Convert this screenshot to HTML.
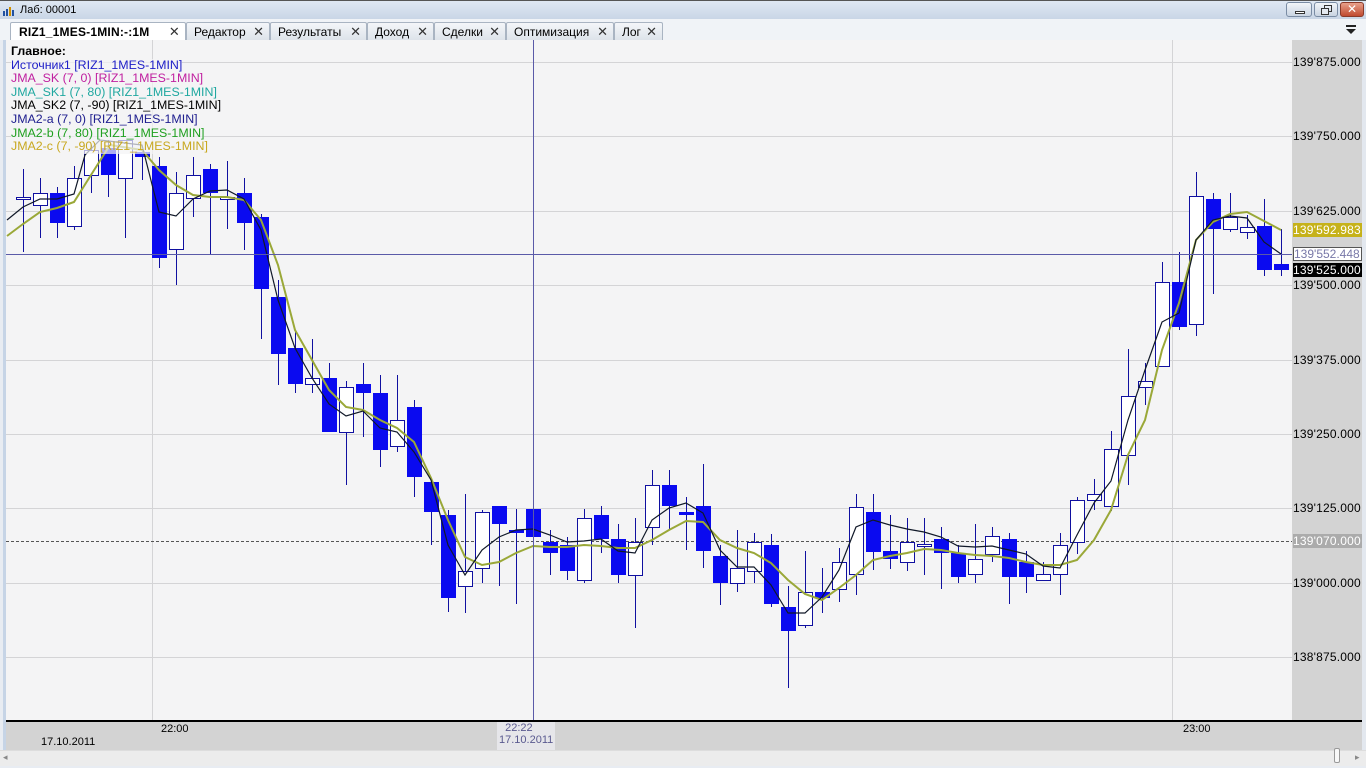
<!DOCTYPE html>
<html><head><meta charset="utf-8"><style>
*{margin:0;padding:0;box-sizing:border-box}
body{width:1366px;height:768px;overflow:hidden;background:#e8ecf2;font-family:"Liberation Sans","DejaVu Sans",sans-serif;position:relative}
#title{position:absolute;left:0;top:0;width:1366px;height:19px;background:linear-gradient(#dfe8f3,#c9d6e6);border-top:1px solid #555;font-size:11px;color:#000}
#title span{position:absolute;left:20px;top:3px}
#tabs{position:absolute;left:0;top:19px;width:1366px;height:21px;background:#f0f3f7}
.tab{position:absolute;top:3px;height:18px;background:linear-gradient(#f4f6f9,#dde3ea);border:1px solid #a9b4c2;border-bottom:none;font-size:12px;padding:2px 0 0 7px;color:#000;border-radius:2px 2px 0 0;white-space:nowrap}
.tab b{position:absolute;right:5px;top:1px;font-weight:normal;font-size:13px;color:#333}
#chart{position:absolute;left:6px;top:40px;width:1286px;height:680px;background:#f4f4f5}
#axis{position:absolute;left:1292px;top:40px;width:70px;height:680px;background:#d3d3d3}
.pl{position:absolute;left:1293px;font-size:12px;color:#000;letter-spacing:.2px;height:14px;line-height:14px;white-space:nowrap}
#time{position:absolute;left:6px;top:720px;width:1356px;height:30px;background:#d3d3d3;border-top:2px solid #000;font-size:11px}
#scroll{position:absolute;left:0;top:750px;width:1366px;height:16px;background:#ececec;border-top:1px solid #ddd}
#legend{position:absolute;left:11px;top:45px;font-size:12.4px;line-height:13.6px;white-space:nowrap}
#legend div{background:rgba(244,244,245,.7);display:inline-block}
</style></head><body>
<div id="title"><svg style="position:absolute;left:2px;top:3px" width="16" height="12"><rect x="1" y="7" width="2" height="5" fill="#2050a0"/><rect x="4" y="5" width="2" height="7" fill="#2050a0"/><rect x="7" y="3" width="2" height="9" fill="#d09000"/><rect x="10" y="6" width="2" height="6" fill="#2050a0"/></svg><span>Лаб: 00001</span>
<div style="position:absolute;left:1286px;top:1px;width:26px;height:15px;border:1px solid #7a8ca4;border-radius:3px;background:linear-gradient(#f2f5f9,#c9d4e2)"><div style="position:absolute;left:8px;top:8px;width:10px;height:3px;border:1px solid #333;background:#fff"></div></div>
<div style="position:absolute;left:1314px;top:1px;width:24px;height:15px;border:1px solid #7a8ca4;border-radius:3px;background:linear-gradient(#f2f5f9,#c9d4e2)"><div style="position:absolute;left:9px;top:2px;width:8px;height:7px;border:1px solid #333"></div><div style="position:absolute;left:6px;top:5px;width:8px;height:7px;border:1px solid #333;background:#e4e9f0"></div></div>
<div style="position:absolute;left:1340px;top:1px;width:24px;height:15px;border:1px solid #8a3a2a;border-radius:3px;background:linear-gradient(#e8a08a,#c04a30);color:#fff;font-size:12px;font-weight:bold;text-align:center;line-height:13px">✕</div>
</div>
<div id="tabs">
<div class="tab" style="left:10px;width:176px;background:#fff;font-weight:bold;letter-spacing:.2px;padding-left:8px">RIZ1_1MES-1MIN:-:1M<b>✕</b></div>
<div class="tab" style="left:186px;width:84px">Редактор<b>✕</b></div>
<div class="tab" style="left:270px;width:97px">Результаты<b>✕</b></div>
<div class="tab" style="left:367px;width:67px">Доход<b>✕</b></div>
<div class="tab" style="left:434px;width:72px">Сделки<b>✕</b></div>
<div class="tab" style="left:506px;width:108px">Оптимизация<b>✕</b></div>
<div class="tab" style="left:614px;width:49px">Лог<b>✕</b></div>
<div style="position:absolute;left:1346px;top:6px;width:10px;height:2px;background:#222"></div>
<div style="position:absolute;left:1346px;top:10px;border-left:5px solid transparent;border-right:5px solid transparent;border-top:5px solid #222"></div>
</div>
<div style="position:absolute;left:3px;top:40px;width:3px;height:710px;background:#c6d4e6"></div>
<div style="position:absolute;left:1362px;top:40px;width:4px;height:710px;background:#e3e8ef"></div>
<div id="chart"></div>
<div id="axis"></div>
<svg id="svg" style="position:absolute;left:0;top:0" width="1366" height="768"></svg>
<div class="pl" style="top:55px">139'875.000</div>
<div class="pl" style="top:129px">139'750.000</div>
<div class="pl" style="top:204px">139'625.000</div>
<div class="pl" style="top:223px;background:#c6b21a;color:#fff;width:69px">139'592.983</div>
<div class="pl" style="top:247px;background:#fff;color:#7878a8;width:69px;border:1px solid #555;line-height:12px;letter-spacing:0">139'552.448</div>
<div class="pl" style="top:263px;background:#000;color:#fff;width:69px">139'525.000</div>
<div class="pl" style="top:278px">139'500.000</div>
<div class="pl" style="top:353px">139'375.000</div>
<div class="pl" style="top:427px">139'250.000</div>
<div class="pl" style="top:501px">139'125.000</div>
<div class="pl" style="top:534px;background:#ababab;color:#fff;width:69px">139'070.000</div>
<div class="pl" style="top:576px">139'000.000</div>
<div class="pl" style="top:650px">138'875.000</div>
<div id="time">
<span style="position:absolute;left:155px;top:1px">22:00</span>
<span style="position:absolute;left:35px;top:14px">17.10.2011</span>
<span style="position:absolute;left:491px;top:0;background:#e6e6ea;color:#5a5a90;padding:0 2px;height:28px">&nbsp;&nbsp;22:22<br>17.10.2011</span>
<span style="position:absolute;left:1177px;top:1px">23:00</span>
</div>
<div id="scroll"><span style="position:absolute;left:3px;top:1px;font-size:9px;color:#888">◂</span><div style="position:absolute;left:1334px;top:-3px;width:6px;height:15px;border:1px solid #999;background:#f8f8f8;border-radius:2px"></div><span style="position:absolute;left:1355px;top:1px;font-size:9px;color:#888">▸</span></div>
<div id="legend">
<div style="font-weight:bold">Главное:</div><br>
<div style="color:#2020c8">Источник1 [RIZ1_1MES-1MIN]</div><br>
<div style="color:#c020a0">JMA_SK (7, 0) [RIZ1_1MES-1MIN]</div><br>
<div style="color:#20a8a0">JMA_SK1 (7, 80) [RIZ1_1MES-1MIN]</div><br>
<div style="color:#000">JMA_SK2 (7, -90) [RIZ1_1MES-1MIN]</div><br>
<div style="color:#202090">JMA2-a (7, 0) [RIZ1_1MES-1MIN]</div><br>
<div style="color:#20a020">JMA2-b (7, 80) [RIZ1_1MES-1MIN]</div><br>
<div style="color:#c8a820">JMA2-c (7, -90) [RIZ1_1MES-1MIN]</div>
</div>
<script>
var C=[[23,197,198,169,252,0],[40,193,205,178,238,0],[57,193,223,187,238,1],[74,178,226,166,230,0],[91,150,175,145,193,0],[108,148,175,140,197,1],[125,140,178,140,238,0],[142,152,157,150,180,1],[159,166,258,157,268,1],[176,193,249,172,285,0],[193,175,198,157,217,0],[210,169,193,164,255,1],[227,197,199,161,229,0],[244,193,223,178,250,1],[261,217,289,214,339,1],[278,297,354,280,385,1],[295,348,384,331,393,1],[312,378,384,339,393,0],[329,378,432,363,432,1],[346,387,432,381,485,0],[363,384,393,363,437,1],[380,393,450,375,467,1],[397,420,446,375,452,0],[414,407,477,400,497,1],[431,482,512,482,545,1],[448,515,598,510,612,1],[465,571,586,494,613,0],[482,512,568,510,583,0],[499,506,524,506,586,1],[516,530,533,509,604,1],[533,509,537,503,583,1],[550,542,553,530,575,1],[567,545,571,537,580,1],[584,518,580,509,583,0],[601,515,539,506,553,1],[618,539,575,524,583,1],[635,542,575,518,628,0],[652,485,527,470,545,0],[669,485,506,470,529,1],[686,512,515,497,550,1],[703,506,551,464,568,1],[720,556,583,545,605,1],[737,568,583,530,592,0],[754,542,571,533,583,0],[771,545,604,534,607,1],[788,607,631,586,688,1],[805,592,625,551,628,0],[822,592,598,568,613,1],[839,562,589,548,602,0],[856,507,574,494,595,0],[873,512,552,494,570,1],[890,551,559,515,569,1],[907,542,562,518,571,0],[924,544,545,518,575,0],[941,539,553,527,589,1],[958,553,577,545,583,1],[975,559,574,524,583,0],[992,536,554,527,562,0],[1009,539,577,533,604,1],[1026,562,577,551,593,1],[1043,574,580,562,580,0],[1060,545,574,533,595,0],[1077,500,542,497,554,0],[1094,494,500,479,510,0],[1111,449,506,431,511,0],[1128,396,455,349,485,0],[1145,381,387,363,405,0],[1162,282,366,262,366,0],[1179,282,327,252,330,1],[1196,196,324,172,336,0],[1213,199,229,193,294,1],[1230,217,229,193,232,0],[1247,227,232,215,239,0],[1264,226,270,199,276,1],[1281,264,270,229,276,1]];
var B="7,220 23,207 40,199 57,199 74,194 85,155 100,140 142,145 159,212 176,216 193,199 210,191 227,190 244,199 261,230 278,300 295,348 312,378 329,404 346,416 363,411 380,428 397,432 414,452 431,480 448,545 465,575 482,550 499,537 516,530 533,529 550,535 567,542 584,541 601,539 618,551 635,553 652,520 669,508 686,503 703,513 720,550 737,567 754,567 771,585 788,613 805,613 822,597 839,570 856,527 873,520 890,525 907,529 924,532 941,537 958,546 975,547 992,546 1009,550 1026,554 1043,566 1060,568 1077,535 1094,503 1111,481 1128,420 1145,370 1162,322 1179,313 1196,240 1213,220 1230,216 1247,218 1264,242 1281,254";
var O="7,236 23,224 40,212 57,208 74,202 91,175 110,145 142,150 159,170 176,185 193,195 210,197 227,197 244,200 261,220 278,265 295,330 312,360 329,390 346,407 363,410 380,420 397,428 414,442 431,478 448,520 465,557 482,565 499,562 516,553 533,546 550,547 567,547 584,545 601,546 618,548 635,548 652,540 669,530 686,521 703,522 720,540 737,548 754,553 771,563 788,580 805,594 822,600 839,588 856,575 873,560 890,556 907,553 924,549 941,550 958,553 975,555 992,556 1009,558 1026,562 1043,565 1060,565 1077,560 1094,540 1111,510 1128,455 1145,420 1162,350 1179,303 1196,240 1213,222 1230,214 1247,212 1264,221 1281,230";
var s='';
[62,136,211,285,360,434,508,583,657].forEach(function(y){s+='<line x1="6" x2="1292" y1="'+(y+.5)+'" y2="'+(y+.5)+'" stroke="#d4d4d6"/>';});
[152,1172].forEach(function(x){s+='<line y1="40" y2="720" x1="'+(x+.5)+'" x2="'+(x+.5)+'" stroke="#d4d4d6"/>';});
s+='<line x1="6" x2="1292" y1="541.5" y2="541.5" stroke="#555" stroke-dasharray="3,2"/>';
C.forEach(function(c){var x=c[0];s+='<line x1="'+(x+.5)+'" x2="'+(x+.5)+'" y1="'+c[3]+'" y2="'+c[4]+'" stroke="#1010a0" stroke-width="1"/>';
var h=Math.max(c[2]-c[1],2);
if(c[5])s+='<rect x="'+(x-7)+'" y="'+c[1]+'" width="15" height="'+h+'" fill="#0a0af0"/>';
else s+='<rect x="'+(x-6.5)+'" y="'+(c[1]+.5)+'" width="14" height="'+h+'" fill="#fff" stroke="#1010a0"/>';});
s+='<polyline points="'+O+'" fill="none" stroke="#9aa838" stroke-width="2"/>';
s+='<polyline points="'+B+'" fill="none" stroke="#101828" stroke-width="1.2"/>';
s+='<line x1="6" x2="1292" y1="254.5" y2="254.5" stroke="#5a5aa8"/>';
s+='<line y1="40" y2="748" x1="533.5" x2="533.5" stroke="#5a5aa8"/>';
document.getElementById('svg').innerHTML=s;
</script>
</body></html>
